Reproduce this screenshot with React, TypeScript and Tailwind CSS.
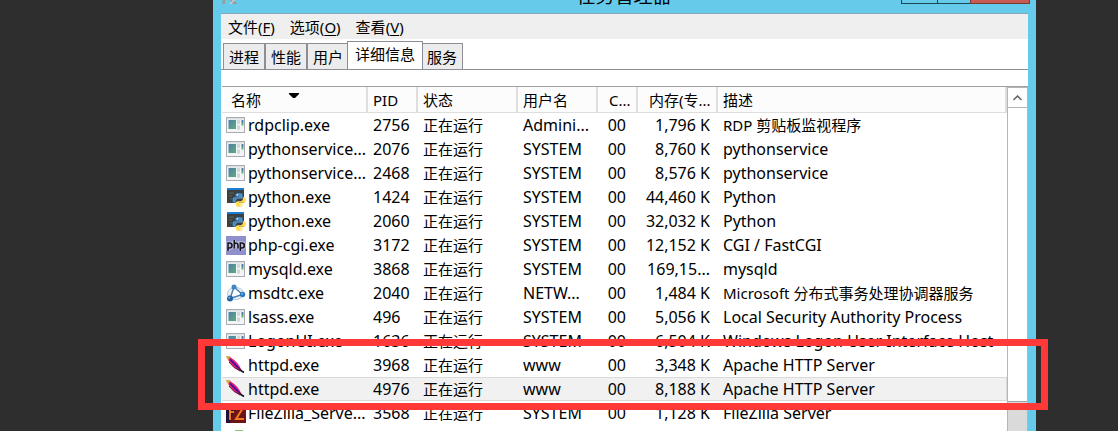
import React, { ReactNode } from "react";

type Kind = "app" | "python" | "php" | "dtc" | "apache" | "filezilla" | "folder";

type Process = {
  name: string;
  pid: string;
  user: string;
  memory: string;
  description: string;
  kind: Kind;
  selected?: boolean;
};

const processes: Process[] = [
  { name: "rdpclip.exe", pid: "2756", user: "Admini...", memory: "1,796 K", description: "RDP 剪贴板监视程序", kind: "app" },
  { name: "pythonservice...", pid: "2076", user: "SYSTEM", memory: "8,760 K", description: "pythonservice", kind: "app" },
  { name: "pythonservice...", pid: "2468", user: "SYSTEM", memory: "8,576 K", description: "pythonservice", kind: "app" },
  { name: "python.exe", pid: "1424", user: "SYSTEM", memory: "44,460 K", description: "Python", kind: "python" },
  { name: "python.exe", pid: "2060", user: "SYSTEM", memory: "32,032 K", description: "Python", kind: "python" },
  { name: "php-cgi.exe", pid: "3172", user: "SYSTEM", memory: "12,152 K", description: "CGI / FastCGI", kind: "php" },
  { name: "mysqld.exe", pid: "3868", user: "SYSTEM", memory: "169,15...", description: "mysqld", kind: "app" },
  { name: "msdtc.exe", pid: "2040", user: "NETW...", memory: "1,484 K", description: "Microsoft 分布式事务处理协调器服务", kind: "dtc" },
  { name: "lsass.exe", pid: "496", user: "SYSTEM", memory: "5,056 K", description: "Local Security Authority Process", kind: "app" },
  { name: "LogonUI.exe", pid: "1636", user: "SYSTEM", memory: "6,504 K", description: "Windows Logon User Interface Host", kind: "app" },
  { name: "httpd.exe", pid: "3968", user: "www", memory: "3,348 K", description: "Apache HTTP Server", kind: "apache" },
  { name: "httpd.exe", pid: "4976", user: "www", memory: "8,188 K", description: "Apache HTTP Server", kind: "apache", selected: true },
  { name: "FileZilla_Serve...", pid: "3568", user: "SYSTEM", memory: "1,128 K", description: "FileZilla Server", kind: "filezilla" },
];

const hasChinese = (text: string) => /[\u4e00-\u9fff]/.test(text);

function ProcessIcon({ kind }: { kind: Kind }) {
  return (
    <svg viewBox="0 0 20 20" className="size-5 shrink-0" aria-hidden="true">
      {kind === "app" && (
        <>
          <defs>
            <linearGradient id="appfill" x1="0" y1="0" x2="1" y2="1">
              <stop offset="0" stopColor="#4f80ab" />
              <stop offset="1" stopColor="#5fac7c" />
            </linearGradient>
          </defs>
          <rect x="0.5" y="2.500" width="18" height="15" fill="#f3f4f6" stroke="#a9adb3" />
          <rect x="1" y="3" width="17" height="1.500" fill="#dcdfe3" />
          <rect x="2.500" y="5" width="7.500" height="9" fill="url(#appfill)" />
          <rect x="11" y="5" width="3" height="4" fill="#d3d7dc" />
          <rect x="11" y="10.500" width="3" height="4" fill="#d3d7dc" />
          <rect x="15.500" y="5" width="2" height="3" fill="#4f7ea5" />
          <rect x="15.500" y="8" width="2" height="2.500" fill="#5fac7c" />
        </>
      )}
      {kind === "python" && (
        <>
          <rect x="1" y="1" width="17" height="15" fill="#3c4043" />
          <rect x="1" y="1" width="17" height="2" fill="#1b7ed2" />
          <path d="M3 6h5M3 9h3M4 12h2" stroke="#4c6e54" />
          <path d="M13 6c-2.500 0-3.500.7-3.500 2v1.700h3.700v.6H8.500C7 10.300 6.500 11.500 6.500 13s.6 2.700 2 2.700h1.300v-2c0-1.300 1-2 2.200-2h3c1 0 1.700-.8 1.700-1.700V8c0-1.300-1.200-2-3.700-2z" fill="#4b8fc6" />
          <path d="M13.200 20c2.500 0 3.500-.7 3.500-2v-1.600H13v-.6h4.800c1.500 0 2.100-1.200 2.100-2.800s-.7-2.700-2.100-2.700h-1v1.800c0 1.300-1 2.100-2.200 2.100h-3c-1 0-1.700.8-1.700 1.700V18c0 1.300 1.200 2 3.300 2z" fill="#ffdc50" />
          <circle cx="11.300" cy="7.800" r=".7" fill="#fff" />
          <circle cx="15.100" cy="18.300" r=".7" fill="#fff" />
        </>
      )}
      {kind === "php" && (
        <>
          <rect y="1" width="20" height="19" fill="#8f8fce" />
          <g fill="none" stroke="#c3c3e6" strokeWidth="3.500">
            <path d="M2 16V8h1.500Q6 8 6 10.500T3.500 13H2M8.300 5v8.500M8.300 9.500Q9 8 10.300 8t1.700 2v3.500M14.300 16V8h1.500q2.500 0 2.500 2.500T15.800 13h-1.500" />
          </g>
          <g fill="none" stroke="#16161f" strokeWidth="1.600">
            <path d="M2 16V8h1.500Q6 8 6 10.500T3.500 13H2M8.300 5v8.500M8.300 9.500Q9 8 10.300 8t1.700 2v3.500M14.300 16V8h1.500q2.500 0 2.500 2.500T15.800 13h-1.500" />
          </g>
        </>
      )}
      {kind === "dtc" && (
        <>
          <ellipse cx="9.500" cy="10.500" rx="8" ry="6" fill="#edf3f9" stroke="#a9c3dd" />
          <path d="M8 4L4 15.500L16.500 11.500Z" fill="#fff" stroke="#4c82b4" strokeWidth="1.500" />
          <circle cx="8" cy="4" r="2.500" fill="#3f86c0" />
          <circle cx="4" cy="15.500" r="3" fill="#2364a6" />
          <circle cx="16.500" cy="11.500" r="2.700" fill="#2f78b9" />
          <circle cx="3.300" cy="14.700" r="1" fill="#79b3e2" />
          <circle cx="16" cy="10.800" r="1" fill="#79b3e2" />
        </>
      )}
      {kind === "apache" && (
        <>
          <path d="M1 2L4 2Q12 7 15 14L16 16Q9 14 6 10Q2 6 1 2Z" fill="#ec1763" />
          <path d="M4 4Q10 7 14.500 14.500Q8 12 4 5Z" fill="#c515c0" />
          <path d="M4 4.500L14.500 15" stroke="#2a148f" strokeWidth="1.400" />
          <path d="M3 7Q7 13 14 16" stroke="#5d1230" fill="none" />
          <path d="M14 15L18 17.500" stroke="#17131b" strokeWidth="1.600" />
          <path d="M0 1L4 1L3 4.500L1 4Z" fill="#cdb04e" />
        </>
      )}
      {kind === "filezilla" && (
        <>
          <rect width="20" height="20" fill="#20123c" />
          <path d="M10 0H20V20H4Z" fill="#6d1418" />
          <path d="M4 17V3H9M4 9H8M9 5H17L10 16H18" fill="none" stroke="#f37b1d" strokeWidth="2" />
        </>
      )}
      {kind === "folder" && (
        <>
          <path d="M1 4h7l2 2h9v14H1z" fill="#efd171" />
          <rect x="9" y="3" width="8" height="4" fill="#8ccb65" />
        </>
      )}
    </svg>
  );
}

function MenuItem({ label, hotkey }: { label: string; hotkey: string }) {
  return (
    <button className="leading-6">
      {label}(<span className="underline underline-offset-2">{hotkey}</span>)
    </button>
  );
}

function Tab({ label, active = false }: { label: string; active?: boolean }) {
  return (
    <button
      role="tab"
      aria-selected={active}
      className={
        active
          ? "z-10 -mx-[2px] h-7 border border-b-0 border-[#8d8d95] bg-white px-[7px] pb-1"
          : "h-[26px] border border-b-0 border-[#8d8d95] bg-[#ececec] px-[5px]"
      }
    >
      {label}
    </button>
  );
}

function HeadCell({ children, className = "" }: { children: ReactNode; className?: string }) {
  return (
    <th className={"border-r-2 border-b border-[#dedede] bg-[#fcfcfc] p-0 pt-px text-left font-normal whitespace-nowrap " + className}>
      {children}
    </th>
  );
}

export default function App() {
  return (
    <main className="h-screen overflow-hidden bg-[#2e2e2e] pr-[82px] pl-[213px] font-['Noto_Sans','Noto_Sans_CJK_SC',sans-serif] text-[15px] text-black">
      <section className="relative flex h-full flex-col bg-[#66caea] px-2">
        <header className="flex h-[13px] shrink-0 items-start">
          <svg viewBox="0 0 18 5" className="h-[5px] w-[18px]" aria-hidden="true">
            <path d="M2 0h2v4H1zM9 0h3l5 4h-4L10 2z" fill="#9a9a9a" />
            <path d="M12 0h2l-4 4H8z" fill="#d0d0d0" />
          </svg>
          <h1 className="-mt-4 flex-1 pl-[108px] text-center text-[19px] leading-6">任务管理器</h1>
          <div className="-mr-[2px] flex h-1">
            <button aria-label="最小化" className="w-9 border-b border-l border-[#1d4654]" />
            <button aria-label="最大化" className="w-[33px] border-b border-l border-[#1d4654]" />
            <button aria-label="关闭" className="w-[60px] border-r border-b border-l border-[#793a35] bg-[#c75b52]" />
          </div>
        </header>

        <div className="flex min-h-0 flex-1 flex-col bg-white">
          <nav className="flex h-[26px] shrink-0 items-center gap-[15px] border-t border-[#89a9b6] bg-[#efefef] pl-[7px]">
            <MenuItem label="文件" hotkey="F" />
            <MenuItem label="选项" hotkey="O" />
            <MenuItem label="查看" hotkey="V" />
          </nav>

          <div role="tablist" className="flex h-[31px] shrink-0 items-end border-b border-[#8d8d95] pl-[2px] leading-6">
            <Tab label="进程" />
            <Tab label="性能" />
            <Tab label="用户" />
            <Tab label="详细信息" active />
            <Tab label="服务" />
          </div>

          <div className="mt-4 ml-px flex min-h-0 flex-1 border-t border-[#a0a0a0]">
            <div className="min-w-0 flex-1 overflow-hidden">
              <table className="w-full table-fixed border-separate border-spacing-0">
                <thead>
                  <tr className="h-[26px]">
                    <HeadCell className="w-[146px] pl-[9px]">
                      <span className="flex items-center gap-7">
                        名称
                        <svg viewBox="0 0 10 5" className="mb-[10px] h-[5px] w-[10px]" aria-hidden="true">
                          <path d="M0 0h10v1L6 5H4L0 1z" />
                        </svg>
                      </span>
                    </HeadCell>
                    <HeadCell className="w-[50px] pl-[5px]">PID</HeadCell>
                    <HeadCell className="w-[100px] pl-[5px]">状态</HeadCell>
                    <HeadCell className="w-20 pl-[5px]">用户名</HeadCell>
                    <HeadCell className="w-10 pl-[11px]">C...</HeadCell>
                    <HeadCell className="w-20 pl-[11px]">内存(专...</HeadCell>
                    <HeadCell className="pl-[5px]">描述</HeadCell>
                  </tr>
                </thead>
                <tbody className="text-base leading-[22px] whitespace-nowrap">
                  {processes.map((p) => (
                    <tr
                      key={p.name + p.pid}
                      className={
                        p.selected
                          ? "h-6 bg-[#f1f1f1] [&>td]:border-[#dadada]"
                          : "h-6 [&>td]:border-transparent"
                      }
                    >
                      <td className="border-y p-0 pl-1">
                        <span className="flex items-center gap-[2px]">
                          <ProcessIcon kind={p.kind} />
                          {p.name}
                        </span>
                      </td>
                      <td className="border-y p-0 pl-[5px]">{p.pid}</td>
                      <td className="border-y p-0 pl-[5px] text-[15px] leading-[22px]">正在运行</td>
                      <td className="border-y p-0 pl-[5px]">{p.user}</td>
                      <td className="border-y p-0 pr-3 text-right">00</td>
                      <td className="border-y p-0 pr-2 text-right">{p.memory}</td>
                      <td
                        className={
                          hasChinese(p.description)
                            ? "border-y border-r p-0 pl-[5px] text-[15px] leading-[22px]"
                            : "border-y border-r p-0 pl-[5px]"
                        }
                      >
                        {p.description}
                      </td>
                    </tr>
                  ))}
                  <tr className="h-6">
                    <td className="p-0 pl-1">
                      <ProcessIcon kind="folder" />
                    </td>
                  </tr>
                </tbody>
              </table>
            </div>
            <div className="flex w-[21px] shrink-0 flex-col border-x border-t border-[#b5b5b5]">
              <button aria-label="向上滚动" className="flex h-5 shrink-0 items-center justify-center border-b border-[#b5b5b5]">
                <svg viewBox="0 0 9 6" className="h-[6px] w-[9px]" aria-hidden="true">
                  <path d="M0.500 5L4.500 1L8.500 5" fill="none" stroke="#606060" strokeWidth="1.500" />
                </svg>
              </button>
              <div className="mt-[293px] flex-1 border-t border-[#a0a0a0] bg-[#dadada]" />
            </div>
          </div>
        </div>

        <div className="pointer-events-none absolute top-[339px] -right-3 -left-[15px] h-[71px] border-7 border-[#ff3838]" />
      </section>
    </main>
  );
}
